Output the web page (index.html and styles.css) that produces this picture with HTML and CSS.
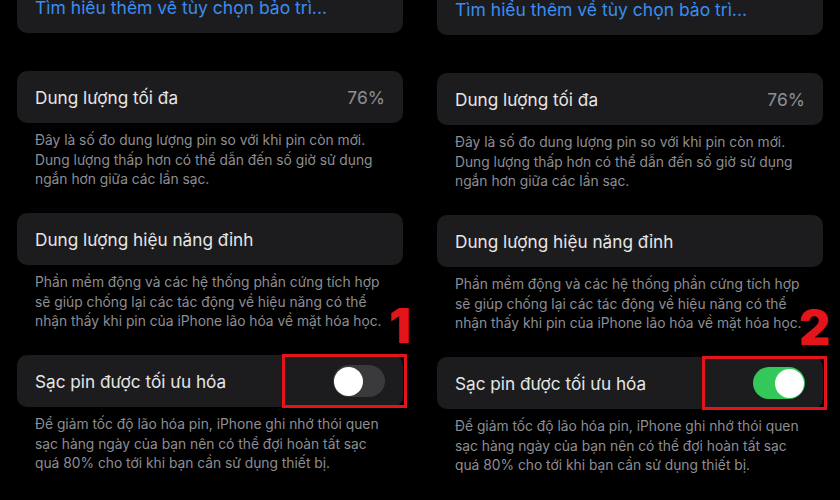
FILE: index.html
```html
<!DOCTYPE html>
<html lang="vi">
<head>
<meta charset="utf-8">
<title>Sạc pin được tối ưu hóa</title>
<link rel="stylesheet" href="styles.css">
</head>
<body>
<div class="screen">
  <section class="panel">
    <div class="card card-top"><span class="link">Tìm hiểu thêm về tùy chọn bảo trì...</span></div>

    <div class="card card-first"><span class="title">Dung lượng tối đa</span><span class="value">76%</span></div>
    <p class="note">Đây là số đo dung lượng pin so với khi pin còn mới.<br>Dung lượng thấp hơn có thể dẫn đến số giờ sử dụng<br>ngắn hơn giữa các lần sạc.</p>

    <div class="card"><span class="title">Dung lượng hiệu năng đỉnh</span></div>
    <p class="note">Phần mềm động và các hệ thống phần cứng tích hợp<br>sẽ giúp chống lại các tác động về hiệu năng có thể<br>nhận thấy khi pin của iPhone lão hóa về mặt hóa học.</p>

    <div class="card card-toggle">
      <span class="title">Sạc pin được tối ưu hóa</span>
      <span class="toggle"><span class="knob"></span></span>
      <span class="mark"></span>
      <span class="step step-1">1</span>
    </div>
    <p class="note">Để giảm tốc độ lão hóa pin, iPhone ghi nhớ thói quen<br>sạc hàng ngày của bạn nên có thể đợi hoàn tất sạc<br>quá 80% cho tới khi bạn cần sử dụng thiết bị.</p>
  </section>

  <section class="panel panel-right">
    <div class="card card-top"><span class="link">Tìm hiểu thêm về tùy chọn bảo trì...</span></div>

    <div class="card card-first"><span class="title">Dung lượng tối đa</span><span class="value">76%</span></div>
    <p class="note">Đây là số đo dung lượng pin so với khi pin còn mới.<br>Dung lượng thấp hơn có thể dẫn đến số giờ sử dụng<br>ngắn hơn giữa các lần sạc.</p>

    <div class="card"><span class="title">Dung lượng hiệu năng đỉnh</span></div>
    <p class="note">Phần mềm động và các hệ thống phần cứng tích hợp<br>sẽ giúp chống lại các tác động về hiệu năng có thể<br>nhận thấy khi pin của iPhone lão hóa về mặt hóa học.</p>

    <div class="card card-toggle">
      <span class="title">Sạc pin được tối ưu hóa</span>
      <span class="toggle toggle-on"><span class="knob"></span></span>
      <span class="mark"></span>
      <span class="step step-2">2</span>
    </div>
    <p class="note">Để giảm tốc độ lão hóa pin, iPhone ghi nhớ thói quen<br>sạc hàng ngày của bạn nên có thể đợi hoàn tất sạc<br>quá 80% cho tới khi bạn cần sử dụng thiết bị.</p>
  </section>
</div>
</body>
</html>
```
FILE: styles.css
```css
html, body {
  margin: 0;
  padding: 0;
  background: #000;
}

.screen {
  display: flex;
  width: 840px;
  height: 500px;
  overflow: hidden;
  background: #000;
  font-family: Inter, "Noto Sans", "DejaVu Sans", sans-serif;
}

.panel {
  width: 420px;
  box-sizing: border-box;
  padding: 0 17px;
}

.panel-right {
  padding-top: 2px;
}

.card {
  position: relative;
  display: flex;
  align-items: center;
  justify-content: space-between;
  height: 52px;
  box-sizing: border-box;
  padding: 0 18px;
  border-radius: 10px;
  background: #1c1c1e;
}

.card-top {
  margin-top: -19px;
}

.card-first {
  margin-top: 38px;
}

.link {
  color: #3b8cf0;
  font-size: 17.5px;
}

.title {
  color: #e6e6e6;
  font-size: 17.2px;
}

.value {
  color: #8e8e93;
  font-size: 17.5px;
}

.note {
  margin: 0 0 23.5px;
  padding: 8px 18px 0;
  color: #8e8e93;
  font-size: 13.8px;
  line-height: 19.5px;
  height: 58.5px;
  white-space: nowrap;
}

.card-toggle {
  padding-right: 18px;
}

.toggle {
  display: flex;
  align-items: center;
  justify-content: flex-start;
  width: 52px;
  height: 32px;
  box-sizing: border-box;
  padding: 0 1px;
  border-radius: 16px;
  background: #3a3a3d;
}

.toggle-on {
  justify-content: flex-end;
  background: #34c759;
}

.knob {
  width: 29px;
  height: 29px;
  border-radius: 50%;
  background: #fff;
}

.mark {
  position: absolute;
  left: 265px;
  top: -1px;
  width: 125px;
  height: 54px;
  box-sizing: border-box;
  border: 3.5px solid #e3151b;
}

.step {
  position: absolute;
  top: -53px;
  color: #e3151b;
  font-family: Inter, "Liberation Sans", sans-serif;
  font-weight: 900;
  font-size: 48px;
  line-height: 48px;
}

.step-1 {
  left: 372px;
}

.step-2 {
  left: 362px;
}
```
